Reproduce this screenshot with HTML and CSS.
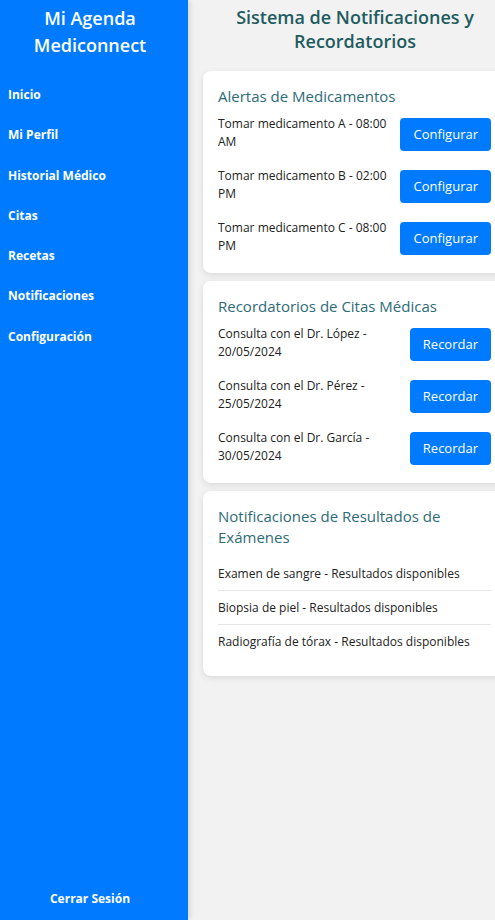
FILE: index.html
```html
<!DOCTYPE html>
<html lang="es">
<head>
<meta charset="utf-8">
<title>Mi Agenda Mediconnect</title>
<link rel="stylesheet" href="styles.css">
</head>
<body>
<div class="app">
  <aside class="sidebar">
    <h1 class="brand">Mi Agenda Mediconnect</h1>
    <nav class="nav">
      <a class="nav-link" href="#">Inicio</a>
      <a class="nav-link" href="#">Mi Perfil</a>
      <a class="nav-link" href="#">Historial Médico</a>
      <a class="nav-link" href="#">Citas</a>
      <a class="nav-link" href="#">Recetas</a>
      <a class="nav-link" href="#">Notificaciones</a>
      <a class="nav-link" href="#">Configuración</a>
    </nav>
    <a class="logout" href="#">Cerrar Sesión</a>
  </aside>
  <main class="main">
    <h2 class="page-title">Sistema de Notificaciones y Recordatorios</h2>

    <section class="card">
      <h3 class="card-title">Alertas de Medicamentos</h3>
      <div class="row">
        <span class="row-text">Tomar medicamento A - 08:00 AM</span>
        <button class="btn">Configurar</button>
      </div>
      <div class="row">
        <span class="row-text">Tomar medicamento B - 02:00 PM</span>
        <button class="btn">Configurar</button>
      </div>
      <div class="row">
        <span class="row-text">Tomar medicamento C - 08:00 PM</span>
        <button class="btn">Configurar</button>
      </div>
    </section>

    <section class="card">
      <h3 class="card-title">Recordatorios de Citas Médicas</h3>
      <div class="row">
        <span class="row-text">Consulta con el Dr. López - 20/05/2024</span>
        <button class="btn">Recordar</button>
      </div>
      <div class="row">
        <span class="row-text">Consulta con el Dr. Pérez - 25/05/2024</span>
        <button class="btn">Recordar</button>
      </div>
      <div class="row">
        <span class="row-text">Consulta con el Dr. García - 30/05/2024</span>
        <button class="btn">Recordar</button>
      </div>
    </section>

    <section class="card card-results">
      <h3 class="card-title">Notificaciones de Resultados de Exámenes</h3>
      <ul class="results">
        <li class="result">Examen de sangre - Resultados disponibles</li>
        <li class="result">Biopsia de piel - Resultados disponibles</li>
        <li class="result">Radiografía de tórax - Resultados disponibles</li>
      </ul>
    </section>
  </main>
</div>
</body>
</html>
```

FILE: styles.css
```css
* { box-sizing: border-box; }

html, body {
  margin: 0;
  padding: 0;
  height: 100%;
  overflow: hidden;
}

body {
  font-family: "Open Sans", "Liberation Sans", sans-serif;
  background: #f2f2f2;
  color: #222;
}

.app {
  display: flex;
  height: 920px;
  width: 522px;
}

.sidebar {
  flex: 0 0 188px;
  width: 188px;
  background: #007bff;
  color: #fff;
  display: flex;
  flex-direction: column;
  box-shadow: 2px 0 6px rgba(0, 0, 0, 0.12);
  position: relative;
  z-index: 1;
}

.brand {
  margin: 5px 0 16px;
  font-size: 18px;
  line-height: 27px;
  font-weight: 600;
  text-align: center;
  padding: 0 28px 0 20px;
}

.nav {
  display: flex;
  flex-direction: column;
}

.nav-link {
  color: #fff;
  text-decoration: none;
  font-size: 12px;
  font-weight: 700;
  line-height: 16.3px;
  padding: 12px 8px;
}

.logout {
  margin-top: auto;
  color: #fff;
  text-decoration: none;
  font-size: 12px;
  font-weight: 700;
  line-height: 16px;
  text-align: center;
  padding: 13px 8px 13px 0;
}

.main {
  flex: 0 0 334px;
  width: 334px;
  padding: 0 15px;
}

.page-title {
  margin: 5px 0 18px;
  font-size: 18px;
  line-height: 24px;
  font-weight: 600;
  color: #1f5c60;
  text-align: center;
}

.card {
  background: #fff;
  border-radius: 8px;
  box-shadow: 0 2px 6px rgba(0, 0, 0, 0.1);
  padding: 15px 16px 10px 15px;
  margin-bottom: 8px;
}

.card-title {
  margin: 0;
  font-size: 15px;
  line-height: 21px;
  font-weight: 400;
  color: #2e6b78;
}

.row {
  display: flex;
  align-items: center;
  justify-content: space-between;
  padding: 8px 0;
}

.row-text {
  font-size: 12px;
  line-height: 18px;
  max-width: 180px;
}

.btn {
  font-family: inherit;
  font-size: 13px;
  line-height: 17px;
  color: #fff;
  background: #007bff;
  border: none;
  border-radius: 4px;
  padding: 8px 13px;
  margin-top: 2px;
  flex: 0 0 auto;
}

.card-results {
  padding-bottom: 18px;
}

.results {
  list-style: none;
  margin: 9px 0 0;
  padding: 0;
}

.result {
  font-size: 12px;
  line-height: 18px;
  padding: 8px 0 7px;
  border-bottom: 1px solid #e6e6e6;
}

.result:last-child {
  border-bottom: none;
}
```
